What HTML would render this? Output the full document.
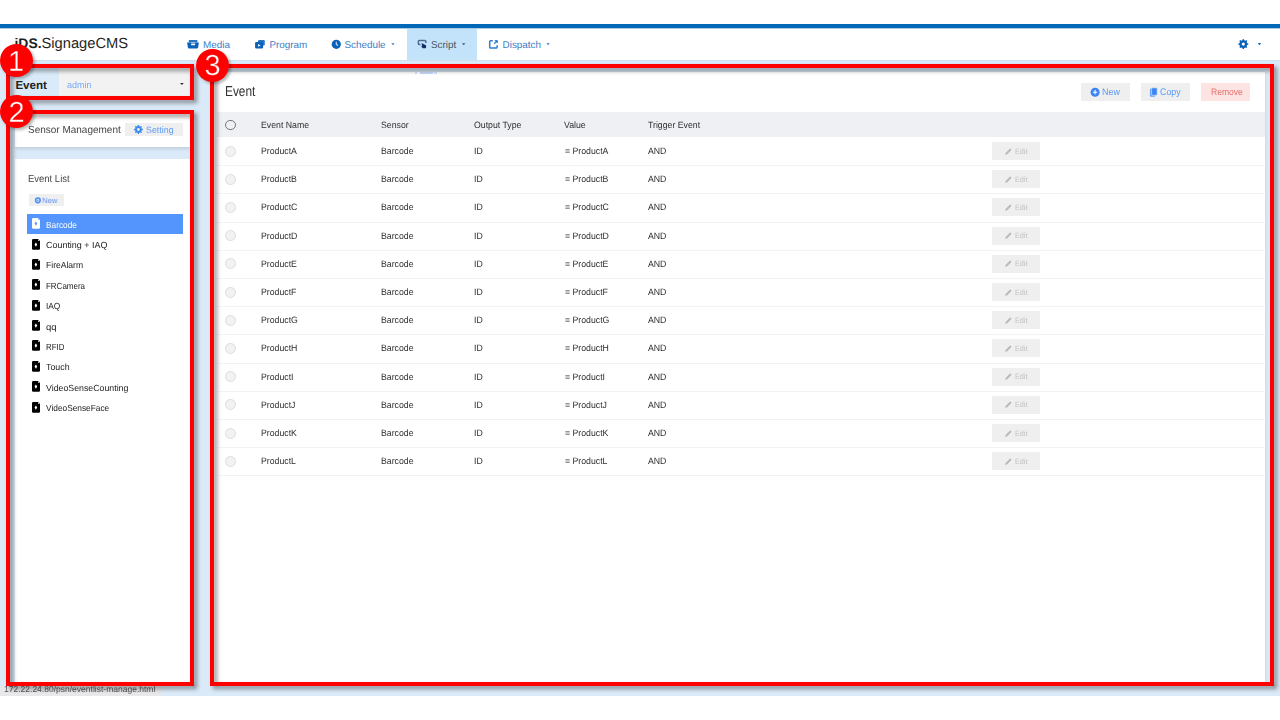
<!DOCTYPE html>
<html><head><meta charset="utf-8">
<style>
*{box-sizing:border-box;margin:0;padding:0}
html,body{width:1280px;height:720px;overflow:hidden;background:#fff}
body{position:relative;font-family:"Liberation Sans",sans-serif;color:#333;text-rendering:geometricPrecision}
.a{position:absolute;white-space:nowrap}
svg.a{overflow:visible}
.redbox{position:absolute;border:4px solid #ff0000;filter:drop-shadow(3px 3px 2.2px rgba(0,0,0,.42))}
.circ{position:absolute;width:33px;height:33px;border-radius:50%;background:#ff0000;color:#fff;font-size:29px;line-height:33px;text-align:center;filter:drop-shadow(2.5px 2.5px 1.6px rgba(0,0,0,.3))}
.circ span{position:absolute;left:0;width:33px;top:2.5px;-webkit-text-stroke:0.35px #ff0000}
.row{position:absolute;left:217px;width:1048px;height:28.2px;border-bottom:1px solid #f3f3f5}
.cell{position:absolute;font-size:9.2px;line-height:9.2px;color:#2d2d2d;top:9px;white-space:nowrap;transform:scaleX(.95);transform-origin:0 0}
.rad{position:absolute;width:11px;height:11px;border-radius:50%;border:1px solid #dedede;background:#f2f2f4}
.editb{position:absolute;left:775px;top:4px;width:48px;height:18px;background:#efefef;white-space:nowrap}
.editb svg{position:absolute;left:13px;top:5.7px}
.editb span{position:absolute;left:22.6px;top:5.6px;font-size:7.8px;line-height:7.8px;color:#c2c2c2;transform:scaleX(.93);transform-origin:0 0}
.li{position:absolute;left:27.2px;width:156.1px;height:20.4px;font-size:8.9px;line-height:22.8px;color:#222;padding-left:19.1px;white-space:nowrap}
.li svg{position:absolute;left:4.8px;top:4.6px}
.btn{position:absolute;top:83px;height:18px;background:#efefef;white-space:nowrap}
</style></head><body>
<div class="a" style="left:0;top:24px;width:1280px;height:4px;background:#0068b6"></div><div class="a" style="left:0;top:28px;width:1280px;height:1px;background:rgba(0,110,190,.35)"></div>
<div class="a" style="left:0;top:60px;width:1280px;height:636px;background:#dbeaf8"></div>
<div class="a" style="left:0;top:59px;width:1280px;height:1px;box-shadow:0 1px 1.5px rgba(0,0,0,.08)"></div>
<div class="a" style="left:14.5px;top:34.2px;font-size:14.7px;line-height:18px;color:#1e1e1e"><b style="font-size:13.9px">iDS.</b>SignageCMS</div>
<div class="a" style="left:407px;top:29px;width:70px;height:31px;background:#c3e3fb"></div>
<div class="a" style="left:203px;top:40.6px;font-size:9.9px;line-height:9.9px;color:#3b7dc4">Media</div>
<div class="a" style="left:269.4px;top:40.6px;font-size:9.9px;line-height:9.9px;color:#3b7dc4">Program</div>
<div class="a" style="left:344.4px;top:40.6px;font-size:9.9px;line-height:9.9px;color:#3b7dc4">Schedule</div>
<div class="a" style="left:431px;top:40.6px;font-size:9.9px;line-height:9.9px;color:#485566">Script</div>
<div class="a" style="left:502.6px;top:40.6px;font-size:9.9px;line-height:9.9px;color:#3b7dc4">Dispatch</div>
<svg class="a" style="left:0;top:0" width="1280" height="60"><path d="M189.3,40 L196.9,40 Q197.4,40 197.4,40.6 L197.4,42.6 L188.8,42.6 L188.8,40.6 Q188.8,40 189.3,40Z" fill="#2a78c4"/><path d="M187.1,42.4 L190.6,42.4 L191.6,43.6 L194.6,43.6 L195.6,42.4 L198.9,42.4 L198.1,47.6 Q198,48.4 197.2,48.4 L188.8,48.4 Q188,48.4 187.9,47.6Z" fill="#0a62b8"/><rect x="190.9" y="43.9" width="4.4" height="1.3" rx="0.6" fill="#fff"/><rect x="258" y="40" width="6.8" height="5.6" rx="1.1" fill="#2376c4"/><rect x="255.1" y="41.9" width="8" height="6.5" rx="1.2" fill="#0a62b8"/><path d="M258.1,44.1 L258.1,46.8 L260.6,45.45Z" fill="#fff"/><circle cx="336.3" cy="44.3" r="4.6" fill="#0a62b8"/><path d="M336.3,41.7 L336.3,44.5 L338.1,45.5" stroke="#cfe3f5" stroke-width="1.1" fill="none"/><path d="M420.5,44.6 L419.2,44.6 Q418.4,44.6 418.4,43.8 L418.4,41.2 Q418.4,40.4 419.2,40.4 L425,40.4 Q425.8,40.4 425.8,41.2 L425.8,43" stroke="#4d6b93" stroke-width="1.5" fill="none"/><path d="M421.6,43 L425.9,45.2 Q426.3,45.6 426.1,47.4 Q425.8,48.3 424.9,48.3 L422.8,48.3 L420.9,46.3 L422.1,46.3Z" fill="#10306a"/><path d="M492.8,40.8 L490.6,40.8 Q489.7,40.8 489.7,41.7 L489.7,47.2 Q489.7,48.1 490.6,48.1 L496.2,48.1 Q497.1,48.1 497.1,47.2 L497.1,45.2" stroke="#2f7ccb" stroke-width="1.5" fill="none"/><path d="M494.1,43.9 L496.2,41.6" stroke="#2f7ccb" stroke-width="1.3"/><path d="M494.4,40.3 L497.7,40.3 L497.7,43.5Z" fill="#0a62b8"/><path d="M391.3,43.2 L394.7,43.2 L393,45.2Z" fill="#3b7dc4"/><path d="M462,43.2 L465.4,43.2 L463.7,45.2Z" fill="#485566"/><path d="M546.4,43.2 L549.8,43.2 L548.1,45.2Z" fill="#3b7dc4"/><path d="M1257.8,43 L1261.2,43 L1259.5,45.2Z" fill="#0a62b8"/><path fill-rule="evenodd" d="M1241.81,40.50 L1242.39,40.31 L1242.60,39.15 L1244.00,39.15 L1244.21,40.31 L1244.79,40.50 L1245.34,40.77 L1246.30,40.10 L1247.30,41.10 L1246.63,42.06 L1246.90,42.61 L1247.09,43.19 L1248.25,43.40 L1248.25,44.80 L1247.09,45.01 L1246.90,45.59 L1246.63,46.14 L1247.30,47.10 L1246.30,48.10 L1245.34,47.43 L1244.79,47.70 L1244.21,47.89 L1244.00,49.05 L1242.60,49.05 L1242.39,47.89 L1241.81,47.70 L1241.26,47.43 L1240.30,48.10 L1239.30,47.10 L1239.97,46.14 L1239.70,45.59 L1239.51,45.01 L1238.35,44.80 L1238.35,43.40 L1239.51,43.19 L1239.70,42.61 L1239.97,42.06 L1239.30,41.10 L1240.30,40.10 L1241.26,40.77Z M1244.90,44.10 A1.6,1.6 0 1 0 1241.70,44.10 A1.6,1.6 0 1 0 1244.90,44.10Z" fill="#0a62b8"/></svg>
<div class="a" style="left:59px;top:66px;width:131px;height:30px;background:#f2f2f2"></div>
<div class="a" style="left:15.4px;top:79.8px;font-size:11.6px;line-height:11.6px;color:#1e1e1e;font-weight:bold">Event</div>
<div class="a" style="left:66.6px;top:80.6px;font-size:9.3px;line-height:9.3px;color:#7aa8f5;transform:scaleX(0.970);transform-origin:0 0">admin</div>
<svg class="a" style="left:0;top:0" width="200" height="100"><path d="M180,83 L183.8,83 L181.9,85Z" fill="#333"/></svg>
<div class="a" style="left:15px;top:112px;width:175px;height:35px;background:#fff;box-shadow:0 2px 3px rgba(0,0,0,.12)"></div>
<div class="a" style="left:27.5px;top:126px;font-size:10.3px;line-height:10.3px;color:#444;transform:scaleX(0.970);transform-origin:0 0">Sensor Management</div>
<div class="a" style="left:125px;top:122.7px;width:58px;height:13.3px;background:#efefef"></div>
<svg class="a" style="left:0;top:0" width="200" height="140"><path fill-rule="evenodd" d="M137.10,126.36 L137.61,126.19 L137.77,125.04 L139.03,125.04 L139.19,126.19 L139.70,126.36 L140.18,126.60 L141.10,125.90 L142.00,126.80 L141.30,127.72 L141.54,128.20 L141.71,128.71 L142.86,128.87 L142.86,130.13 L141.71,130.29 L141.54,130.80 L141.30,131.28 L142.00,132.20 L141.10,133.10 L140.18,132.40 L139.70,132.64 L139.19,132.81 L139.03,133.96 L137.77,133.96 L137.61,132.81 L137.10,132.64 L136.62,132.40 L135.70,133.10 L134.80,132.20 L135.50,131.28 L135.26,130.80 L135.09,130.29 L133.94,130.13 L133.94,128.87 L135.09,128.71 L135.26,128.20 L135.50,127.72 L134.80,126.80 L135.70,125.90 L136.62,126.60Z M139.80,129.50 A1.4,1.4 0 1 0 137.00,129.50 A1.4,1.4 0 1 0 139.80,129.50Z" fill="#3d8bf0"/></svg>
<div class="a" style="left:145.6px;top:125.6px;font-size:9.2px;line-height:9.2px;color:#5a9bf6;transform:scaleX(0.965);transform-origin:0 0">Setting</div>
<div class="a" style="left:15px;top:159px;width:175px;height:525px;background:#fff"></div>
<div class="a" style="left:27.5px;top:174.6px;font-size:10.2px;line-height:10.2px;color:#444;transform:scaleX(0.930);transform-origin:0 0">Event List</div>
<div class="a" style="left:29px;top:193.8px;width:34.7px;height:12px;background:#efefef"></div>
<svg class="a" style="left:0;top:0" width="80" height="210"><circle cx="37.9" cy="200.3" r="2.3" stroke="#4a8ff2" stroke-width="1.6" fill="none"/><circle cx="37.9" cy="200.3" r="0.8" fill="#4a8ff2"/></svg>
<div class="a" style="left:42px;top:197px;font-size:7.6px;line-height:7.6px;color:#5a9bf6">New</div>
<div class="li" style="top:213.70px;background:#5394fd;color:#fff"><svg width="8" height="11" viewBox="0 0 8 11"><path d="M1.2,0 L6,0 L8,2 L8,9.6 Q8,10.8 6.8,10.8 L1.2,10.8 Q0,10.8 0,9.6 L0,1.2 Q0,0 1.2,0Z" fill="#fff"/><path d="M6.1,0.6 L7.4,1.9 L6.1,1.9Z" fill="#5394fd"/><path d="M3.9,3.5 L5.2,5.6 L3.9,7.8 L2.6,5.6Z" fill="#5394fd"/></svg><span style="display:inline-block;transform:scaleX(0.935);transform-origin:0 50%">Barcode</span></div>
<div class="li" style="top:234.06px"><svg width="8" height="11" viewBox="0 0 8 11"><path d="M1.2,0 L6,0 L8,2 L8,9.6 Q8,10.8 6.8,10.8 L1.2,10.8 Q0,10.8 0,9.6 L0,1.2 Q0,0 1.2,0Z" fill="#000"/><path d="M6.1,0.6 L7.4,1.9 L6.1,1.9Z" fill="#fff"/><path d="M3.9,3.5 L5.2,5.6 L3.9,7.8 L2.6,5.6Z" fill="#fff"/></svg><span style="display:inline-block;transform:scaleX(1.008);transform-origin:0 50%">Counting + IAQ</span></div>
<div class="li" style="top:254.42px"><svg width="8" height="11" viewBox="0 0 8 11"><path d="M1.2,0 L6,0 L8,2 L8,9.6 Q8,10.8 6.8,10.8 L1.2,10.8 Q0,10.8 0,9.6 L0,1.2 Q0,0 1.2,0Z" fill="#000"/><path d="M6.1,0.6 L7.4,1.9 L6.1,1.9Z" fill="#fff"/><path d="M3.9,3.5 L5.2,5.6 L3.9,7.8 L2.6,5.6Z" fill="#fff"/></svg><span style="display:inline-block;transform:scaleX(0.964);transform-origin:0 50%">FireAlarm</span></div>
<div class="li" style="top:274.78px"><svg width="8" height="11" viewBox="0 0 8 11"><path d="M1.2,0 L6,0 L8,2 L8,9.6 Q8,10.8 6.8,10.8 L1.2,10.8 Q0,10.8 0,9.6 L0,1.2 Q0,0 1.2,0Z" fill="#000"/><path d="M6.1,0.6 L7.4,1.9 L6.1,1.9Z" fill="#fff"/><path d="M3.9,3.5 L5.2,5.6 L3.9,7.8 L2.6,5.6Z" fill="#fff"/></svg><span style="display:inline-block;transform:scaleX(0.898);transform-origin:0 50%">FRCamera</span></div>
<div class="li" style="top:295.14px"><svg width="8" height="11" viewBox="0 0 8 11"><path d="M1.2,0 L6,0 L8,2 L8,9.6 Q8,10.8 6.8,10.8 L1.2,10.8 Q0,10.8 0,9.6 L0,1.2 Q0,0 1.2,0Z" fill="#000"/><path d="M6.1,0.6 L7.4,1.9 L6.1,1.9Z" fill="#fff"/><path d="M3.9,3.5 L5.2,5.6 L3.9,7.8 L2.6,5.6Z" fill="#fff"/></svg><span style="display:inline-block;transform:scaleX(0.939);transform-origin:0 50%">IAQ</span></div>
<div class="li" style="top:315.50px"><svg width="8" height="11" viewBox="0 0 8 11"><path d="M1.2,0 L6,0 L8,2 L8,9.6 Q8,10.8 6.8,10.8 L1.2,10.8 Q0,10.8 0,9.6 L0,1.2 Q0,0 1.2,0Z" fill="#000"/><path d="M6.1,0.6 L7.4,1.9 L6.1,1.9Z" fill="#fff"/><path d="M3.9,3.5 L5.2,5.6 L3.9,7.8 L2.6,5.6Z" fill="#fff"/></svg><span style="display:inline-block;transform:scaleX(1.071);transform-origin:0 50%">qq</span></div>
<div class="li" style="top:335.86px"><svg width="8" height="11" viewBox="0 0 8 11"><path d="M1.2,0 L6,0 L8,2 L8,9.6 Q8,10.8 6.8,10.8 L1.2,10.8 Q0,10.8 0,9.6 L0,1.2 Q0,0 1.2,0Z" fill="#000"/><path d="M6.1,0.6 L7.4,1.9 L6.1,1.9Z" fill="#fff"/><path d="M3.9,3.5 L5.2,5.6 L3.9,7.8 L2.6,5.6Z" fill="#fff"/></svg><span style="display:inline-block;transform:scaleX(0.891);transform-origin:0 50%">RFID</span></div>
<div class="li" style="top:356.22px"><svg width="8" height="11" viewBox="0 0 8 11"><path d="M1.2,0 L6,0 L8,2 L8,9.6 Q8,10.8 6.8,10.8 L1.2,10.8 Q0,10.8 0,9.6 L0,1.2 Q0,0 1.2,0Z" fill="#000"/><path d="M6.1,0.6 L7.4,1.9 L6.1,1.9Z" fill="#fff"/><path d="M3.9,3.5 L5.2,5.6 L3.9,7.8 L2.6,5.6Z" fill="#fff"/></svg><span style="display:inline-block;transform:scaleX(0.994);transform-origin:0 50%">Touch</span></div>
<div class="li" style="top:376.58px"><svg width="8" height="11" viewBox="0 0 8 11"><path d="M1.2,0 L6,0 L8,2 L8,9.6 Q8,10.8 6.8,10.8 L1.2,10.8 Q0,10.8 0,9.6 L0,1.2 Q0,0 1.2,0Z" fill="#000"/><path d="M6.1,0.6 L7.4,1.9 L6.1,1.9Z" fill="#fff"/><path d="M3.9,3.5 L5.2,5.6 L3.9,7.8 L2.6,5.6Z" fill="#fff"/></svg><span style="display:inline-block;transform:scaleX(0.990);transform-origin:0 50%">VideoSenseCounting</span></div>
<div class="li" style="top:396.94px"><svg width="8" height="11" viewBox="0 0 8 11"><path d="M1.2,0 L6,0 L8,2 L8,9.6 Q8,10.8 6.8,10.8 L1.2,10.8 Q0,10.8 0,9.6 L0,1.2 Q0,0 1.2,0Z" fill="#000"/><path d="M6.1,0.6 L7.4,1.9 L6.1,1.9Z" fill="#fff"/><path d="M3.9,3.5 L5.2,5.6 L3.9,7.8 L2.6,5.6Z" fill="#fff"/></svg><span style="display:inline-block;transform:scaleX(0.938);transform-origin:0 50%">VideoSenseFace</span></div>
<div class="a" style="left:212px;top:72px;width:1053px;height:612px;background:#fff;box-shadow:1px 0 3px rgba(0,0,0,.07)"></div>
<div class="a" style="left:415px;top:72.3px;width:22px;height:1.6px;background:linear-gradient(90deg,rgba(80,140,240,.22) 0 10%,transparent 10% 22%,rgba(80,140,240,.3) 22% 80%,transparent 80% 86%,rgba(80,140,240,.22) 86%)"></div>
<div class="a" style="left:224.8px;top:85.2px;font-size:14.4px;line-height:14.4px;color:#333;transform:scaleX(0.826);transform-origin:0 0">Event</div>
<div class="btn" style="left:1080.7px;width:49.3px"></div>
<div class="btn" style="left:1141px;width:49px"></div>
<div class="btn" style="left:1200.6px;width:49.2px;background:#fde4e3"></div>
<div class="a" style="left:1101.9px;top:88.3px;font-size:9.5px;line-height:9.5px;color:#5a9bf6;transform:scaleX(0.940);transform-origin:0 0">New</div>
<div class="a" style="left:1159.8px;top:88.3px;font-size:9.5px;line-height:9.5px;color:#5a9bf6;transform:scaleX(0.930);transform-origin:0 0">Copy</div>
<div class="a" style="left:1210.8px;top:88.3px;font-size:9.5px;line-height:9.5px;color:#e8716b;transform:scaleX(0.900);transform-origin:0 0">Remove</div>
<svg class="a" style="left:0;top:0" width="1280" height="110"><circle cx="1095.1" cy="92.2" r="4.5" fill="#3b86f3"/><path d="M1093,92.2 L1097.2,92.2 M1095.1,90.1 L1095.1,94.3" stroke="#fff" stroke-width="1.1"/><rect x="1149.9" y="88.6" width="5.4" height="8.1" rx="1" fill="#6aa6f7"/><rect x="1151.6" y="87.8" width="5.6" height="7.5" rx="1" fill="#3b86f3" stroke="#efefef" stroke-width="0.6"/></svg>
<div class="a" style="left:217px;top:112px;width:1048px;height:25px;background:#eef0f3"></div>
<div class="a" style="left:225.2px;top:119.8px;width:10.6px;height:10.6px;border-radius:50%;border:1.4px solid #77777f"></div>
<div class="cell" style="left:261.4px;top:121px">Event Name</div>
<div class="cell" style="left:381px;top:121px">Sensor</div>
<div class="cell" style="left:474px;top:121px">Output Type</div>
<div class="cell" style="left:564.1px;top:121px">Value</div>
<div class="cell" style="left:648.1px;top:121px">Trigger Event</div>
<div class="row" style="top:138.00px"><div class="rad" style="top:7.5px;left:7.8px"></div><div class="cell" style="left:44.3px">ProductA</div><div class="cell" style="left:164px">Barcode</div><div class="cell" style="left:257px">ID</div><div class="cell" style="left:347.6px">= ProductA</div><div class="cell" style="left:431px">AND</div><div class="editb"><svg width="7" height="7" viewBox="0 0 7 7"><path d="M0.2,6.8 L0.6,5 L4.8,0.8 Q5.3,0.3 5.8,0.8 L6.2,1.2 Q6.7,1.7 6.2,2.2 L2,6.4Z" fill="#bababa"/></svg><span>Edit</span></div></div>
<div class="row" style="top:166.20px"><div class="rad" style="top:7.5px;left:7.8px"></div><div class="cell" style="left:44.3px">ProductB</div><div class="cell" style="left:164px">Barcode</div><div class="cell" style="left:257px">ID</div><div class="cell" style="left:347.6px">= ProductB</div><div class="cell" style="left:431px">AND</div><div class="editb"><svg width="7" height="7" viewBox="0 0 7 7"><path d="M0.2,6.8 L0.6,5 L4.8,0.8 Q5.3,0.3 5.8,0.8 L6.2,1.2 Q6.7,1.7 6.2,2.2 L2,6.4Z" fill="#bababa"/></svg><span>Edit</span></div></div>
<div class="row" style="top:194.40px"><div class="rad" style="top:7.5px;left:7.8px"></div><div class="cell" style="left:44.3px">ProductC</div><div class="cell" style="left:164px">Barcode</div><div class="cell" style="left:257px">ID</div><div class="cell" style="left:347.6px">= ProductC</div><div class="cell" style="left:431px">AND</div><div class="editb"><svg width="7" height="7" viewBox="0 0 7 7"><path d="M0.2,6.8 L0.6,5 L4.8,0.8 Q5.3,0.3 5.8,0.8 L6.2,1.2 Q6.7,1.7 6.2,2.2 L2,6.4Z" fill="#bababa"/></svg><span>Edit</span></div></div>
<div class="row" style="top:222.60px"><div class="rad" style="top:7.5px;left:7.8px"></div><div class="cell" style="left:44.3px">ProductD</div><div class="cell" style="left:164px">Barcode</div><div class="cell" style="left:257px">ID</div><div class="cell" style="left:347.6px">= ProductD</div><div class="cell" style="left:431px">AND</div><div class="editb"><svg width="7" height="7" viewBox="0 0 7 7"><path d="M0.2,6.8 L0.6,5 L4.8,0.8 Q5.3,0.3 5.8,0.8 L6.2,1.2 Q6.7,1.7 6.2,2.2 L2,6.4Z" fill="#bababa"/></svg><span>Edit</span></div></div>
<div class="row" style="top:250.80px"><div class="rad" style="top:7.5px;left:7.8px"></div><div class="cell" style="left:44.3px">ProductE</div><div class="cell" style="left:164px">Barcode</div><div class="cell" style="left:257px">ID</div><div class="cell" style="left:347.6px">= ProductE</div><div class="cell" style="left:431px">AND</div><div class="editb"><svg width="7" height="7" viewBox="0 0 7 7"><path d="M0.2,6.8 L0.6,5 L4.8,0.8 Q5.3,0.3 5.8,0.8 L6.2,1.2 Q6.7,1.7 6.2,2.2 L2,6.4Z" fill="#bababa"/></svg><span>Edit</span></div></div>
<div class="row" style="top:279.00px"><div class="rad" style="top:7.5px;left:7.8px"></div><div class="cell" style="left:44.3px">ProductF</div><div class="cell" style="left:164px">Barcode</div><div class="cell" style="left:257px">ID</div><div class="cell" style="left:347.6px">= ProductF</div><div class="cell" style="left:431px">AND</div><div class="editb"><svg width="7" height="7" viewBox="0 0 7 7"><path d="M0.2,6.8 L0.6,5 L4.8,0.8 Q5.3,0.3 5.8,0.8 L6.2,1.2 Q6.7,1.7 6.2,2.2 L2,6.4Z" fill="#bababa"/></svg><span>Edit</span></div></div>
<div class="row" style="top:307.20px"><div class="rad" style="top:7.5px;left:7.8px"></div><div class="cell" style="left:44.3px">ProductG</div><div class="cell" style="left:164px">Barcode</div><div class="cell" style="left:257px">ID</div><div class="cell" style="left:347.6px">= ProductG</div><div class="cell" style="left:431px">AND</div><div class="editb"><svg width="7" height="7" viewBox="0 0 7 7"><path d="M0.2,6.8 L0.6,5 L4.8,0.8 Q5.3,0.3 5.8,0.8 L6.2,1.2 Q6.7,1.7 6.2,2.2 L2,6.4Z" fill="#bababa"/></svg><span>Edit</span></div></div>
<div class="row" style="top:335.40px"><div class="rad" style="top:7.5px;left:7.8px"></div><div class="cell" style="left:44.3px">ProductH</div><div class="cell" style="left:164px">Barcode</div><div class="cell" style="left:257px">ID</div><div class="cell" style="left:347.6px">= ProductH</div><div class="cell" style="left:431px">AND</div><div class="editb"><svg width="7" height="7" viewBox="0 0 7 7"><path d="M0.2,6.8 L0.6,5 L4.8,0.8 Q5.3,0.3 5.8,0.8 L6.2,1.2 Q6.7,1.7 6.2,2.2 L2,6.4Z" fill="#bababa"/></svg><span>Edit</span></div></div>
<div class="row" style="top:363.60px"><div class="rad" style="top:7.5px;left:7.8px"></div><div class="cell" style="left:44.3px">ProductI</div><div class="cell" style="left:164px">Barcode</div><div class="cell" style="left:257px">ID</div><div class="cell" style="left:347.6px">= ProductI</div><div class="cell" style="left:431px">AND</div><div class="editb"><svg width="7" height="7" viewBox="0 0 7 7"><path d="M0.2,6.8 L0.6,5 L4.8,0.8 Q5.3,0.3 5.8,0.8 L6.2,1.2 Q6.7,1.7 6.2,2.2 L2,6.4Z" fill="#bababa"/></svg><span>Edit</span></div></div>
<div class="row" style="top:391.80px"><div class="rad" style="top:7.5px;left:7.8px"></div><div class="cell" style="left:44.3px">ProductJ</div><div class="cell" style="left:164px">Barcode</div><div class="cell" style="left:257px">ID</div><div class="cell" style="left:347.6px">= ProductJ</div><div class="cell" style="left:431px">AND</div><div class="editb"><svg width="7" height="7" viewBox="0 0 7 7"><path d="M0.2,6.8 L0.6,5 L4.8,0.8 Q5.3,0.3 5.8,0.8 L6.2,1.2 Q6.7,1.7 6.2,2.2 L2,6.4Z" fill="#bababa"/></svg><span>Edit</span></div></div>
<div class="row" style="top:420.00px"><div class="rad" style="top:7.5px;left:7.8px"></div><div class="cell" style="left:44.3px">ProductK</div><div class="cell" style="left:164px">Barcode</div><div class="cell" style="left:257px">ID</div><div class="cell" style="left:347.6px">= ProductK</div><div class="cell" style="left:431px">AND</div><div class="editb"><svg width="7" height="7" viewBox="0 0 7 7"><path d="M0.2,6.8 L0.6,5 L4.8,0.8 Q5.3,0.3 5.8,0.8 L6.2,1.2 Q6.7,1.7 6.2,2.2 L2,6.4Z" fill="#bababa"/></svg><span>Edit</span></div></div>
<div class="row" style="top:448.20px"><div class="rad" style="top:7.5px;left:7.8px"></div><div class="cell" style="left:44.3px">ProductL</div><div class="cell" style="left:164px">Barcode</div><div class="cell" style="left:257px">ID</div><div class="cell" style="left:347.6px">= ProductL</div><div class="cell" style="left:431px">AND</div><div class="editb"><svg width="7" height="7" viewBox="0 0 7 7"><path d="M0.2,6.8 L0.6,5 L4.8,0.8 Q5.3,0.3 5.8,0.8 L6.2,1.2 Q6.7,1.7 6.2,2.2 L2,6.4Z" fill="#bababa"/></svg><span>Edit</span></div></div>
<div class="a" style="left:0;top:686px;width:160.5px;height:10px;background:#e8e8eb"></div>
<div class="a" style="left:4px;top:684.7px;font-size:8.6px;line-height:8.6px;color:#555;transform:scaleX(0.990);transform-origin:0 0">172.22.24.80/psn/eventlist-manage.html</div>
<div class="redbox" style="left:6px;top:64px;width:188px;height:36px"></div>
<div class="redbox" style="left:6px;top:110px;width:188px;height:576px"></div>
<div class="redbox" style="left:210px;top:64px;width:1064px;height:622px"></div>
<div class="circ" style="left:-0.5px;top:43.5px"><span>1</span></div>
<div class="circ" style="left:0px;top:94.5px"><span>2</span></div>
<div class="circ" style="left:196px;top:49px"><span style="top:1.2px">3</span></div>
</body></html>
